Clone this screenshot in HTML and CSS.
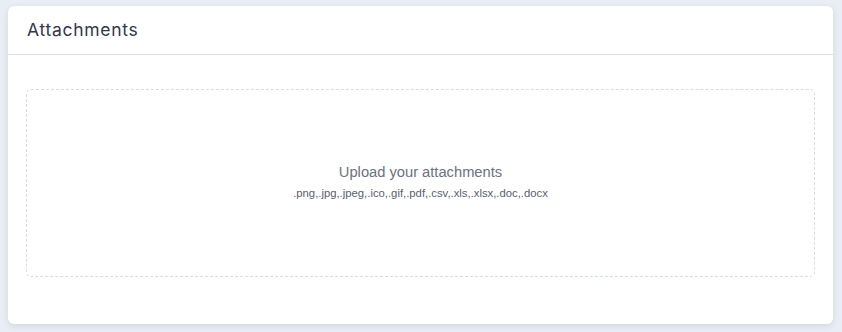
FILE: index.html
```html
<!DOCTYPE html>
<html>
<head>
<meta charset="utf-8">
<link rel="stylesheet" href="styles.css">
</head>
<body>
<div class="card">
  <div class="card-header">
    <h4 class="card-title">Attachments</h4>
  </div>
  <div class="card-body">
    <div class="dropzone">
      <div class="dz-title">Upload your attachments</div>
      <div class="dz-types">.png,.jpg,.jpeg,.ico,.gif,.pdf,.csv,.xls,.xlsx,.doc,.docx</div>
    </div>
  </div>
</div>
</body>
</html>
```
FILE: styles.css
```css
html, body {
  margin: 0;
  padding: 0;
}
body {
  background: #e9edf5;
  padding: 6px 9px 8px 8px;
  font-family: "Liberation Sans", Arial, sans-serif;
}
.card {
  background: #ffffff;
  border-radius: 6px;
  box-shadow: 0 2px 6px rgba(40, 55, 90, 0.12);
  height: 318px;
  box-sizing: border-box;
  display: flex;
  flex-direction: column;
}
.card-header {
  height: 49px;
  box-sizing: border-box;
  border-bottom: 1px solid #dde1e8;
  display: flex;
  align-items: center;
  padding: 0 19px;
}
.card-title {
  margin: 0;
  font-family: Inter, "Open Sans", sans-serif;
  font-weight: 400;
  font-size: 17.5px;
  letter-spacing: 0.7px;
  color: #33364f;
  padding-bottom: 1px;
}
.card-body {
  padding: 34px 18px 0 18px;
}
.dropzone {
  height: 188px;
  box-sizing: border-box;
  border: 1px dashed #d7dde8;
  border-radius: 5px;
  display: flex;
  flex-direction: column;
  align-items: center;
  justify-content: center;
  padding-bottom: 3px;
}
.dz-title {
  font-size: 14.7px;
  color: #6b7280;
  line-height: 18px;
}
.dz-types {
  font-size: 11.3px;
  color: #596070;
  margin-top: 5px;
  line-height: 14px;
}
```
